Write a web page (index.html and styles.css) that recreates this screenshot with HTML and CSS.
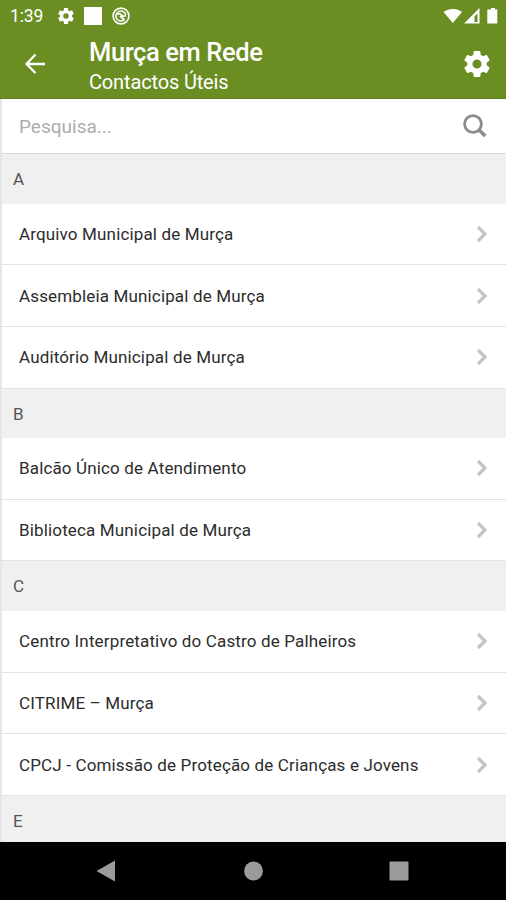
FILE: index.html
```html
<!DOCTYPE html>
<html lang="pt">
<head>
<meta charset="utf-8">
<title>Murça em Rede</title>
<link rel="stylesheet" href="styles.css">
</head>
<body>
<svg class="defs" width="0" height="0">
  <symbol id="gear" viewBox="2 2 20 20"><path fill-rule="evenodd" d="M19.43 12.98c.04-.32.07-.64.07-.98s-.03-.66-.07-.98l2.11-1.65c.19-.15.24-.42.12-.64l-2-3.46c-.12-.22-.39-.3-.61-.22l-2.49 1c-.52-.4-1.08-.73-1.69-.98l-.38-2.65A.49.49 0 0 0 14 2h-4c-.25 0-.46.18-.49.42l-.38 2.65c-.61.25-1.17.59-1.69.98l-2.49-1c-.23-.09-.49 0-.61.22l-2 3.46c-.13.22-.07.49.12.64l2.11 1.65c-.04.32-.07.65-.07.98s.03.66.07.98l-2.11 1.65c-.19.15-.24.42-.12.64l2 3.46c.12.22.39.3.61.22l2.49-1c.52.4 1.08.73 1.69.98l.38 2.65c.03.24.24.42.49.42h4c.25 0 .46-.18.49-.42l.38-2.65c.61-.25 1.17-.59 1.69-.98l2.49 1c.23.09.49 0 .61-.22l2-3.46c.12-.22.07-.49-.12-.64zM12 15.5a3.5 3.5 0 1 1 0-7 3.5 3.5 0 0 1 0 7z"/></symbol>
  <symbol id="chevron" viewBox="0 0 12 18"><path d="M2 2l7 7-7 7" fill="none" stroke="#c4c4c4" stroke-width="3.2"/></symbol>
</svg>
<div class="screen">
  <header class="top">
    <div class="status">
      <span class="clock">1:39</span>
      <svg class="s-gear" width="16" height="16"><use href="#gear"/></svg>
      <span class="s-square"></span>
      <svg class="s-ring" width="18" height="18" viewBox="0 0 18 18" fill="none" stroke="#fff"><circle cx="9" cy="9" r="7.9" stroke-width="1.6"/><path d="M12.500 12.500a5 5 0 1 1 1.300-4.500" stroke-width="1.500"/><path d="M5 7.500c2-1.500 3.500-.8 4.500.5s2.500 1.500 4.500.5M8 9l4.500 4" stroke-width="1.800"/></svg>
      <span class="spacer"></span>
      <svg width="56" height="18" viewBox="0 0 56 18" fill="#fff"><path d="M0.500 5C5.500 1 14.500 1 19 5L9.800 16z"/><path d="M21 16.500L36.500 1v15.500z"/><path d="M31.500 9.500l3-3V15h-3z" fill="#6b8e23"/><path d="M47 2.500h2.200V1h4v1.500h2.300v14H45.500v-14z" transform="translate(-1.200 0)"/></svg>
    </div>
    <div class="bar">
      <svg class="back" width="22" height="22" viewBox="0 0 22 22" fill="none" stroke="#fff" stroke-width="2.300"><path d="M11.500 1.500L2.500 11l9 9M2.500 11H21"/></svg>
      <div class="titles"><h1>Murça em Rede</h1><p>Contactos Úteis</p></div>
      <svg class="settings" width="26" height="26"><use href="#gear"/></svg>
    </div>
  </header>
  <main>
    <div class="search"><span>Pesquisa...</span><svg width="24" height="24" viewBox="0 0 24 24" fill="none" stroke="#8b8b8b"><circle cx="10" cy="10" r="8.400" stroke-width="2.800"/><path d="M15.800 15.800l6.500 6.200" stroke-width="3.600"/></svg></div>
    <h2>A</h2>
    <ul>
      <li><span>Arquivo Municipal de Murça</span><svg><use href="#chevron"/></svg></li>
      <li><span>Assembleia Municipal de Murça</span><svg><use href="#chevron"/></svg></li>
      <li><span>Auditório Municipal de Murça</span><svg><use href="#chevron"/></svg></li>
    </ul>
    <h2>B</h2>
    <ul>
      <li><span>Balcão Único de Atendimento</span><svg><use href="#chevron"/></svg></li>
      <li><span>Biblioteca Municipal de Murça</span><svg><use href="#chevron"/></svg></li>
    </ul>
    <h2>C</h2>
    <ul>
      <li><span>Centro Interpretativo do Castro de Palheiros</span><svg><use href="#chevron"/></svg></li>
      <li><span>CITRIME – Murça</span><svg><use href="#chevron"/></svg></li>
      <li><span>CPCJ - Comissão de Proteção de Crianças e Jovens</span><svg><use href="#chevron"/></svg></li>
    </ul>
    <h2>E</h2>
  </main>
  <nav>
    <svg width="506" height="58" viewBox="0 0 506 58" fill="#9b9b9b"><path d="M96.500 29L115 18.500v21z"/><circle cx="253.500" cy="29" r="9.400"/><rect x="389.500" y="19.500" width="19" height="19" rx="1"/></svg>
  </nav>
</div>
</body>
</html>
```

FILE: styles.css
```css
* { box-sizing: border-box; margin: 0; padding: 0; }
body { font-family: Roboto, "Liberation Sans", sans-serif; background: #fff; }
.defs { display: block; }
.screen { width: 506px; height: 900px; display: flex; flex-direction: column; overflow: hidden; }
.top { height: 99px; flex: none; background: #6b8e23; color: #fff; fill: #fff; border-bottom: 1px solid #5d7d1c; }
.status { height: 31px; display: flex; align-items: center; padding: 0 7px 0 10px; }
.clock { width: 48px; font-size: 17.5px; letter-spacing: -0.1px; }
.s-square { width: 18px; height: 18px; background: #fff; margin: 0 10px; }
.spacer { flex: 1; }
.bar { height: 67px; display: flex; align-items: center; padding: 0 16px 0 24px; }
.back { margin-top: -1px; }
.titles { flex: 1; padding: 3px 0 0 43px; }
h1 { font-size: 25.5px; line-height: 32px; font-weight: 500; letter-spacing: -0.4px; }
p { font-size: 20px; line-height: 28px; letter-spacing: -0.15px; }
.settings { margin-top: -1px; }
main { flex: 1; min-height: 0; overflow: hidden; border-left: 2px solid #e6e6e8; }
.search { height: 55px; display: flex; align-items: center; justify-content: space-between; padding: 0 19px 0 17px; border-bottom: 1px solid #d9d9d9; font-size: 19px; color: #adadad; }
.search span { padding-top: 1px; }
h2 { height: 49.5px; line-height: 51px; padding-left: 11px; background: #f0f0f0; font-size: 17px; font-weight: 400; color: #555; }
li { height: 61.7px; display: flex; align-items: center; justify-content: space-between; padding: 0 18px 0 17px; border-bottom: 1px solid #e2e2e2; font-size: 17px; letter-spacing: 0.15px; color: #2c2c2c; }
li svg { width: 12px; height: 18px; }
nav { height: 58px; flex: none; background: #000; }
nav svg { display: block; }
```
